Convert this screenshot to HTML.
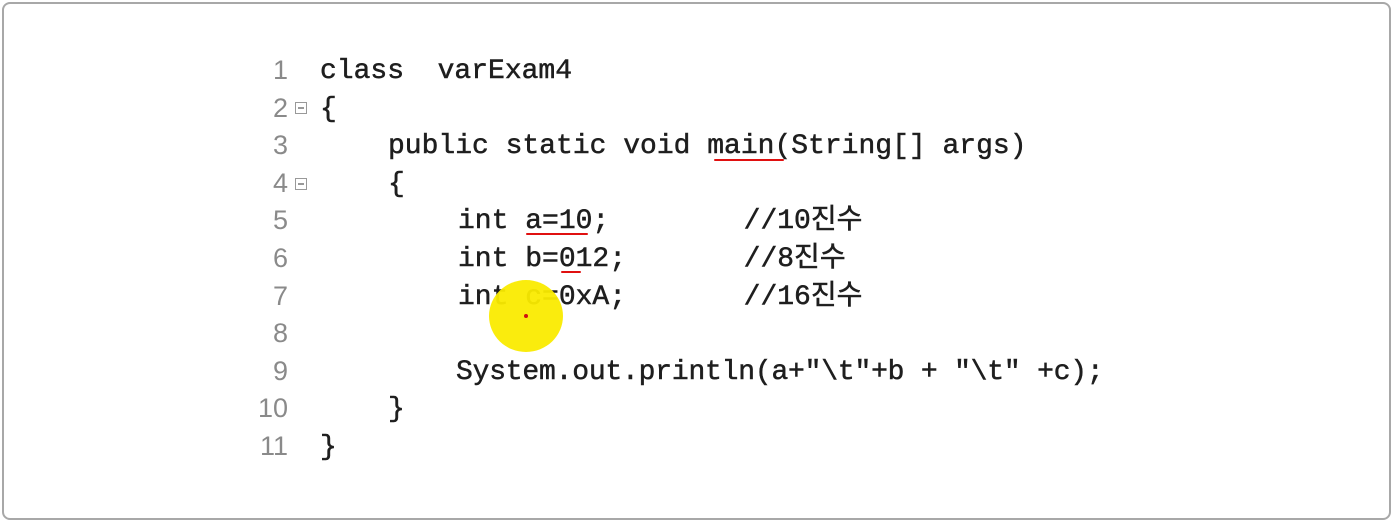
<!DOCTYPE html>
<html><head><meta charset="utf-8"><style>
html,body{margin:0;padding:0;background:#fff;width:1397px;height:526px;overflow:hidden}
.frame{position:absolute;left:2px;top:2px;width:1389px;height:518px;border:2px solid #a8a8a8;border-radius:8px;box-sizing:border-box}
.l{position:absolute;font-family:"Liberation Mono","Noto Sans CJK KR",monospace;font-size:28px;color:#1e1e1e;white-space:pre;line-height:37px;-webkit-text-stroke:0.5px #1e1e1e}
.n{position:absolute;font-family:"Liberation Sans",sans-serif;font-size:27px;color:#8a8a8a;line-height:37px;width:40px;text-align:right;left:248px}
.f{position:absolute;left:295px;width:12px;height:12px;border:1.5px solid #999;box-sizing:border-box}
.f:after{content:"";position:absolute;left:2px;right:2px;top:4px;height:1.5px;background:#999}
.u{position:absolute;height:2px;background:#e01010;border-radius:2px}
</style></head><body>
<div class="frame"></div>
<div class="n" style="top:52px">1</div>
<div class="n" style="top:90px">2</div>
<div class="n" style="top:127px">3</div>
<div class="n" style="top:165px">4</div>
<div class="n" style="top:202px">5</div>
<div class="n" style="top:240px">6</div>
<div class="n" style="top:278px">7</div>
<div class="n" style="top:315px">8</div>
<div class="n" style="top:353px">9</div>
<div class="n" style="top:390px">10</div>
<div class="n" style="top:428px">11</div>
<div class="n" style="top:465px;height:8px;overflow:hidden">12</div>
<div class="f" style="top:102px"></div>
<div class="f" style="top:178px"></div>
<div class="l" style="left:320px;top:53px">class  varExam4</div>
<div class="l" style="left:320px;top:91px">{</div>
<div class="l" style="left:388px;top:128px">public static void main(String[] args)</div>
<div class="l" style="left:388px;top:166px">{</div>
<div class="l" style="left:458px;top:203px">int a=10;        //10진수</div>
<div class="l" style="left:458px;top:241px">int b=012;       //8진수</div>
<div class="l" style="left:458px;top:279px">int c=0xA;       //16진수</div>
<div class="l" style="left:456px;top:354px;letter-spacing:-0.2px">System.out.println(a+"\t"+b + "\t" +c);</div>
<div class="l" style="left:388px;top:391px">}</div>
<div class="l" style="left:320px;top:429px">}</div>
<div class="u" style="left:714px;top:159px;width:70px"></div>
<div class="u" style="left:526px;top:233px;width:62px"></div>
<div class="u" style="left:561px;top:271px;width:20px"></div>
<div style="position:absolute;left:489px;top:280px;width:74px;height:72px;border-radius:50%;background:rgba(250,235,0,0.95)"></div>
<div style="position:absolute;left:524px;top:314px;width:4px;height:4px;border-radius:50%;background:#d01010"></div>
</body></html>
